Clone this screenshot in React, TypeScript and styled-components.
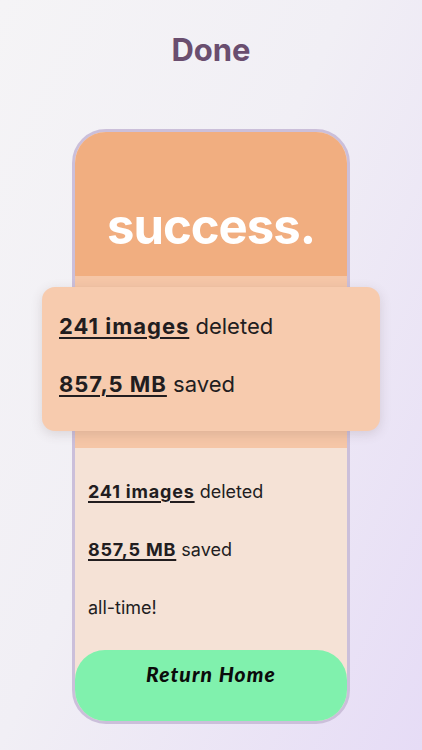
import React from "react"
import styled, { createGlobalStyle } from "styled-components"

const GlobalStyle = createGlobalStyle`
  html, body {
    margin: 0;
    padding: 0;
  }
  body {
    font-family: Inter, "Noto Sans", sans-serif;
    background: linear-gradient(115deg, #f5f4f6 0%, #f1eff5 45%, #e6dcf6 100%);
    min-height: 750px;
    color: #1e1a1c;
  }
`

const Page = styled.div`
  display: flex;
  flex-direction: column;
  align-items: center;
  padding-top: 32px;
  min-height: 750px;
  box-sizing: border-box;
`

const Title = styled.h1`
  margin: 0;
  font-size: 31px;
  line-height: 36px;
  font-weight: 700;
  color: #6a4e6f;
`

const Frame = styled.div`
  margin-top: 61px;
  width: 278px;
  box-sizing: border-box;
  border: 3px solid #cbbfda;
  border-radius: 34px;
  background: #f5e2d6;
  display: flex;
  flex-direction: column;
`

const Header = styled.div`
  height: 144px;
  background: #f1ae80;
  border-radius: 31px 31px 0 0;
  display: flex;
  align-items: flex-end;
  justify-content: center;
  padding-bottom: 25px;
  box-sizing: border-box;
`

const Headline = styled.div`
  color: #ffffff;
  font-size: 49px;
  line-height: 1;
  font-weight: 700;
  letter-spacing: -1px;
`

const Band = styled.div`
  background: #f5c6a7;
  padding: 11px 0 17px;
`

const Card = styled.div`
  margin: 0 -33px;
  background: #f7cbae;
  border-radius: 13px;
  box-shadow: 0 3px 12px rgba(90, 60, 60, 0.16);
  padding: 24px 17px 32px;
  display: flex;
  flex-direction: column;
  gap: 28px;
`

const Stats = styled.div`
  display: flex;
  flex-direction: column;
  gap: 34px;
  padding: 32px 13px 30px;
`

const Line = styled.div<{ $size: number; $lh: number }>`
  font-size: ${(p) => p.$size}px;
  line-height: ${(p) => p.$lh}px;
  font-weight: 400;
  color: #221d1f;
`

const Strong = styled.span`
  font-weight: 700;
  letter-spacing: 0.045em;
  text-decoration: underline;
  text-decoration-thickness: 2px;
  text-underline-offset: 3px;
`

const HomeButton = styled.button`
  border: none;
  height: 71px;
  background: #80f1ad;
  border-radius: 30px 30px 31px 31px;
  padding: 11px 0 0;
  display: flex;
  justify-content: center;
  align-items: flex-start;
  font-family: Lato, "Open Sans", sans-serif;
  font-style: italic;
  font-weight: 900;
  font-size: 21px;
  line-height: 26px;
  letter-spacing: 1.1px;
  color: #0b0b0b;
  cursor: pointer;
`

const App = () => {
  return (
    <Page>
      <GlobalStyle />
      <Title>Done</Title>
      <Frame>
        <Header>
          <Headline>success.</Headline>
        </Header>
        <Band>
          <Card>
            <Line $size={22} $lh={30}>
              <Strong>241 images</Strong> deleted
            </Line>
            <Line $size={22} $lh={30}>
              <Strong>857,5 MB</Strong> saved
            </Line>
          </Card>
        </Band>
        <Stats>
          <Line $size={18} $lh={24}>
            <Strong>241 images</Strong> deleted
          </Line>
          <Line $size={18} $lh={24}>
            <Strong>857,5 MB</Strong> saved
          </Line>
          <Line $size={18} $lh={24}>all-time!</Line>
        </Stats>
        <HomeButton>Return Home</HomeButton>
      </Frame>
    </Page>
  )
}

export default App
